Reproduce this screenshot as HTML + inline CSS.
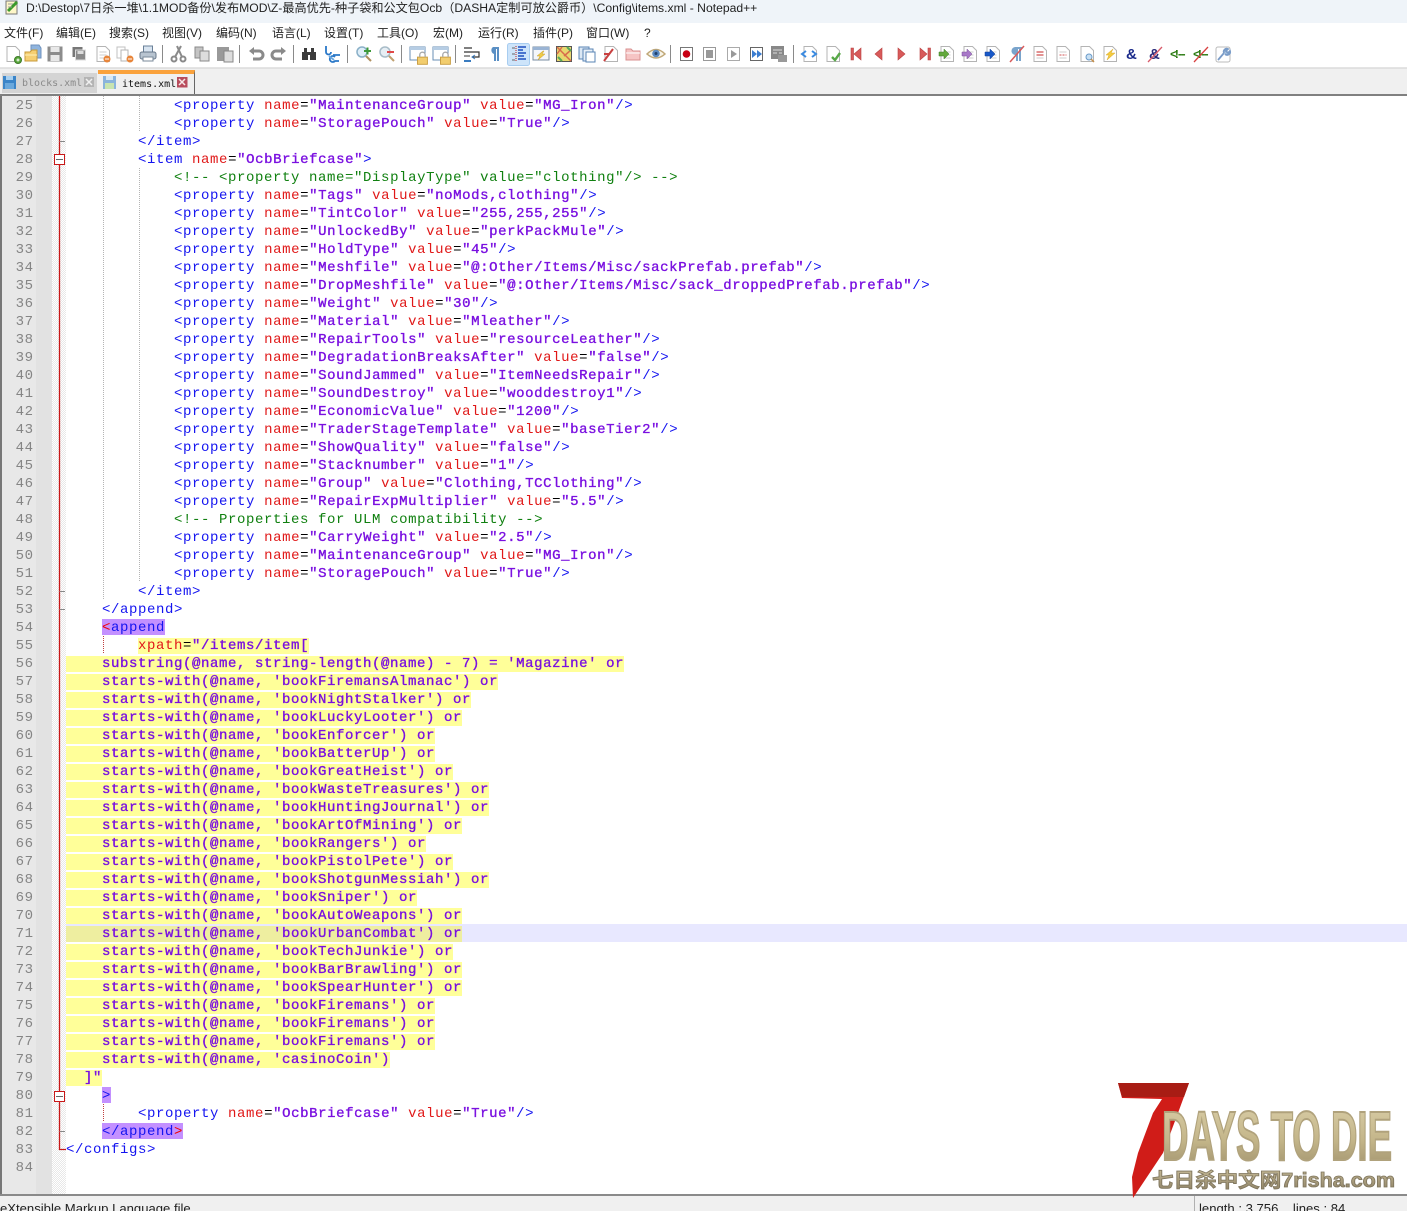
<!DOCTYPE html>
<html><head><meta charset="utf-8"><style>
html,body{margin:0;padding:0;background:#fff}
#p{position:relative;width:1407px;height:1211px;overflow:hidden;background:#fff;font-family:"Liberation Sans","Noto Sans CJK SC",sans-serif}
#title{position:absolute;left:0;top:0;width:1407px;height:23px;background:#eff4f9}
#title span{position:absolute;left:26px;top:1px;font-size:12.15px;line-height:15px;color:#222;white-space:pre}
#menu{position:absolute;left:0;top:23px;width:1407px;height:19px;background:#fff;font-size:12px;color:#222}
#menu span{position:absolute;top:2px;line-height:16px;white-space:pre}
#tb{position:absolute;left:0;top:42px}
#tabs{position:absolute;left:0;top:68px;width:1407px;height:26px;background:#f0f0f0;border-top:1px solid #e0e0e0;box-sizing:border-box}
.tab{position:absolute;box-sizing:border-box;font-family:"DejaVu Sans Mono","Liberation Mono",monospace;font-size:10px;white-space:pre}
#ed{position:absolute;left:0;top:96px;width:1407px;font-family:"Liberation Mono",monospace;font-size:14px;letter-spacing:.6px}
.l{position:relative;height:18px;line-height:20px;padding-left:66px;white-space:pre;color:#000}
.l i{position:absolute;left:0;width:33.6px;text-align:right;font-style:normal;color:#858585;font-weight:normal;-webkit-text-stroke:0;top:0}
.t{color:#1414f0}.a{color:#e01818}.v{color:#7a10e0;-webkit-text-stroke:.35px #7a10e0}.c{color:#108010}
.y{background:#ffff99;display:inline-block;height:16px;line-height:16px;margin-top:2px;vertical-align:top}
.cur{background:linear-gradient(90deg,transparent 66px,#e8e8ff 66px)}.cur .y{background:#eeeea0}
.m{background:#c390ff;display:inline-block;height:16px;line-height:18px;margin-top:1px;vertical-align:top}
.r{color:#f00000}
#st{position:absolute;left:0;top:1194px;width:1407px;height:17px;background:#f0f0f0;border-top:2px solid #8a8a8a;box-sizing:border-box;font-size:13.1px;color:#222;overflow:hidden}
#st span{position:absolute;top:5px;line-height:15px;white-space:pre}
</style></head><body><div id="p">

<div id="title"><span>D:\Destop\7日杀一堆\1.1MOD备份\发布MOD\Z-最高优先-种子袋和公文包Ocb（DASHA定制可放公爵币）\Config\items.xml - Notepad++</span>
<svg style="position:absolute;left:4px;top:0" width="18" height="16"><path d="M2 1H13V14H2Z" fill="#fdf6c8" stroke="#777"/><path d="M4 11L13 2" stroke="#3a9a2a" stroke-width="3"/><path d="M4 4H9M4 7H8" stroke="#999"/></svg></div>

<div id="menu">
<span style="left:4px">文件(F)</span><span style="left:56px">编辑(E)</span><span style="left:109px">搜索(S)</span><span style="left:162px">视图(V)</span><span style="left:216px">编码(N)</span><span style="left:272px">语言(L)</span><span style="left:324px">设置(T)</span><span style="left:377px">工具(O)</span><span style="left:433px">宏(M)</span><span style="left:478px">运行(R)</span><span style="left:533px">插件(P)</span><span style="left:586px">窗口(W)</span><span style="left:644px">?</span>
</div>

<svg id="tb" width="1407" height="26" viewBox="0 0 1407 26">
<defs>
<path id="d" d="M-6-7.500H2.500L6.500-3.500V7.500H-6Z" fill="#fff" stroke="#b4b4b4"/>
<g id="ld"><use href="#d"/><path d="M-3.500-2H3.500M-3.500 1H3.500M-3.500 4H3.500" stroke="#ccc"/></g>
<g id="lock"><rect x="-5" y="-1" width="11" height="8" fill="#f2cd6e" stroke="#c79a3a"/><path d="M-2.500-1V-3.500A3 3 0 0 1 3.500-3.500V-1" fill="none" stroke="#aaa" stroke-width="1.500"/></g>
<g id="win"><rect x="-8" y="-7" width="15" height="13" fill="#fff" stroke="#6a8fb5"/><rect x="-8" y="-7" width="15" height="3" fill="#b6cde4"/></g>
</defs>
<rect width="1407" height="26" fill="#fff"/>
<g transform="translate(13,12)"><use href="#d"/><circle cx="5" cy="6" r="3.500" fill="#5aa83c" stroke="#3d7a28"/><path d="M3.500 6H6.500M5 4.500V7.500" stroke="#fff"/></g>
<g transform="translate(33,12)"><path d="M-2-9H6L8-6V4H-2Z" fill="#8fb4de" stroke="#6f92bd"/><path d="M-8-2H-3L-1-4H4V7H-8Z" fill="#f5cf72" stroke="#c79a3a"/><path d="M-8 1H4" stroke="#fff0b8"/></g>
<g transform="translate(55,12)"><rect x="-7.500" y="-7.500" width="15" height="15" fill="#8c8c8c"/><rect x="-4.500" y="-7" width="9" height="5" fill="#e8e8e8"/><rect x="-4.500" y="1" width="9" height="6" fill="#e8e8e8"/></g>
<g transform="translate(79,12)"><rect x="-6.500" y="-7" width="10" height="10" fill="#777"/><rect x="-3.500" y="-4" width="10" height="10" fill="#8a8a8a" stroke="#ddd"/><rect x="-1.500" y="-3" width="6" height="3" fill="#ddd"/></g>
<g transform="translate(103,12)"><use href="#ld"/><circle cx="4" cy="5" r="3.500" fill="#e8853a"/><path d="M2 5H6" stroke="#fff"/></g>
<g transform="translate(125,12)"><path d="M-8-7H0V4H-8Z" fill="#fff" stroke="#c0c0c0"/><path d="M-4-4H3V7H-4Z" fill="#fff" stroke="#b4b4b4"/><circle cx="5" cy="5" r="3.500" fill="#e8853a"/><path d="M3 5H7" stroke="#fff"/></g>
<g transform="translate(148,12)"><rect x="-4.500" y="-8" width="9" height="6" fill="#d8e4f0" stroke="#6a8098"/><rect x="-8" y="-2" width="16" height="7" rx="2" fill="#b8c4d0" stroke="#68788a"/><rect x="-5" y="3" width="10" height="4" fill="#fff" stroke="#7a8a9a"/></g>
<path d="M162.500 3V21M239.500 3V21M293.500 3V21M347.500 3V21M401.500 3V21M455.500 3V21M670.500 3V21M793.500 3V21" stroke="#8a8a8a"/>
<g transform="translate(178,12)" stroke="#8a8a8a" fill="none" stroke-width="2"><path d="M3-8L-3 3M-1-8L4 3"/><circle cx="-4" cy="5" r="2.500"/><circle cx="5" cy="5" r="2.500"/></g>
<g transform="translate(202,12)"><path d="M-7-7H1V4H-7Z" fill="#c4c4c4" stroke="#8a8a8a"/><path d="M-2-3H7V7H-2Z" fill="#ddd" stroke="#8a8a8a"/></g>
<g transform="translate(225,12)"><rect x="-8" y="-7" width="12" height="14" fill="#999"/><rect x="-1" y="-3" width="9" height="11" fill="#ddd" stroke="#888"/></g>
<g transform="translate(256,12)" fill="none" stroke="#8a8a8a" stroke-width="3"><path d="M-4-3H3A4 4 0 0 1 3 5H-3"/><path d="M-7-3L-2-7V1Z" fill="#8a8a8a" stroke="none"/></g>
<g transform="translate(279,12)" fill="none" stroke="#8a8a8a" stroke-width="3"><path d="M4-3H-3A4 4 0 0 0-3 5H3"/><path d="M7-3L2-7V1Z" fill="#8a8a8a" stroke="none"/></g>
<g transform="translate(309,12)" fill="#3c3c3c"><rect x="-7" y="-2" width="6" height="8"/><rect x="1" y="-2" width="6" height="8"/><rect x="-5" y="-6" width="3" height="5"/><rect x="2" y="-6" width="3" height="5"/><rect x="-1" y="-2" width="2" height="3"/></g>
<g transform="translate(333,12)" fill="none" stroke="#2a78c8" stroke-width="1.800"><path d="M-7-8V-2A2.500 2.500 0 1 0-2-2"/><path d="M0 1H7M2 3A3 3 0 1 0 2 7H6"/><path d="M-4 2L1 6" stroke="#6aa8e0"/></g>
<g transform="translate(364,12)"><circle cx="-2" cy="-2" r="5" fill="#dfeef8" stroke="#8ab0c8" stroke-width="1.500"/><path d="M2 2L7 7" stroke="#b09060" stroke-width="2"/><path d="M0-3H7M3.500-6.500V.5" stroke="#3d9a3a" stroke-width="2"/></g>
<g transform="translate(387,12)"><circle cx="-2" cy="-2" r="5" fill="#e6eef4" stroke="#a8bcc8" stroke-width="1.500"/><path d="M2 2L7 7" stroke="#c0a070" stroke-width="2"/><path d="M0-2H7" stroke="#e04848" stroke-width="2"/></g>
<g transform="translate(418,12)"><use href="#win"/><use href="#lock" transform="translate(4,4) scale(.9)"/></g>
<g transform="translate(441,12)"><use href="#win"/><use href="#lock" transform="translate(4,4) scale(.9)"/></g>
<g transform="translate(472,12)" fill="none"><path d="M-8-6H0M-8-2H7V3H0" stroke="#333" stroke-width="1.200"/><path d="M-8 2H-2" stroke="#333"/><path d="M-8 7H-1" stroke="#3a7cc0" stroke-width="2"/><path d="M3 1L0 3L3 5" stroke="#3a7cc0"/></g>
<g transform="translate(494,12)" fill="#5a8fc4"><path d="M-1-7H5V7H3V-5H2V7H0V0A4 4 0 0 1-1-7Z"/></g>
<rect x="507.500" y="1.500" width="22" height="22" rx="2" fill="#cde4fa" stroke="#a8cdf0"/>
<g transform="translate(519,12)" stroke="#1f4fc0"><path d="M-3-8V8" stroke-dasharray="1 1" stroke="#c02020"/><path d="M-1-7H7M-1-4H4M-1-1H7M-1 2H5M-1 5H7" stroke-width="1.600"/><path d="M-7-6H-4M-7 0H-4M-7 6H-4" stroke="#666"/></g>
<g transform="translate(541,12)"><rect x="-8" y="-7" width="16" height="13" fill="#f4f6fa" stroke="#7a8ca0"/><rect x="-8" y="-7" width="16" height="3" fill="#9ab4d4"/><path d="M2-3L-4 2H-1L-3 6L4 0H1L3-3Z" fill="#f0cc48" stroke="#c8a030" stroke-width=".5"/></g>
<g transform="translate(564,12)"><rect x="-7.500" y="-7.500" width="15" height="15" fill="#e8d870" stroke="#555"/><path d="M-7-7L7 7M-2-7L-7 0M7-4L0 2" stroke="#d86c4c" stroke-width="1.500"/><path d="M-6 3L-2 7M3-7L7-3" stroke="#58a858" stroke-width="2"/></g>
<g transform="translate(587,12)"><rect x="-8" y="-7" width="10" height="12" fill="#dce8f4" stroke="#5a84b4"/><rect x="-4" y="-5" width="10" height="12" fill="#e8f0f8" stroke="#5a84b4"/><path d="M-1-2H8V8H-1Z" fill="#fff" stroke="#5a84b4"/></g>
<g transform="translate(610,12)"><use href="#d" transform="translate(1,0)"/><path d="M-6 7L3-5" stroke="#c84040" stroke-width="2"/><path d="M-6 0H0" stroke="#c84040" stroke-width="2"/></g>
<g transform="translate(633,12)"><path d="M-7-5H-2L0-3H7V6H-7Z" fill="#f6c4c4" stroke="#d89090"/><path d="M-7-1H7" stroke="#fff"/></g>
<g transform="translate(656,12)"><path d="M-9 0Q0-9 9 0Q0 8-9 0Z" fill="#f8f4e8" stroke="#c0a878" stroke-width="1.500"/><circle cy="-.5" r="3.800" fill="#5a88c0"/><circle cy="-.5" r="1.500" fill="#20406a"/></g>
<rect x="680.500" y="5.500" width="12" height="13" fill="#fff" stroke="#777"/><circle cx="686.500" cy="12" r="3.800" fill="#c80014"/>
<rect x="703.500" y="5.500" width="12" height="13" fill="#fff" stroke="#999"/><rect x="706" y="8" width="7" height="8" fill="#999"/>
<rect x="727.500" y="5.500" width="12" height="13" fill="#fff" stroke="#aaa"/><path d="M731 8L737 12L731 16Z" fill="#999"/>
<rect x="750.500" y="5.500" width="12" height="13" fill="#fff" stroke="#666"/><path d="M752 8L757 12L752 16ZM757 8L762 12L757 16Z" fill="#3a7cd0"/>
<g transform="translate(779,12)"><rect x="-8" y="-8" width="13" height="13" fill="#888"/><path d="M-6-4H3M-6-1H-2M0-1H3" stroke="#ddd"/><rect x="-1" y="1" width="9" height="7" fill="#999"/></g>
<g transform="translate(809,12)"><use href="#d" transform="translate(1,0)"/><path d="M-3-3L-7 0L-3 3M3-3L7 0L3 3" fill="none" stroke="#3a8ae0" stroke-width="2"/></g>
<g transform="translate(833,12)"><use href="#d"/><path d="M-1 3L2 6L7-1" fill="none" stroke="#58a848" stroke-width="2.400"/></g>
<g fill="#d85a5a" stroke="#b84040" stroke-width=".6">
<path d="M851 6H853.500V18H851ZM861 6V18L854 12Z"/>
<path d="M882 6V18L875 12Z"/>
<path d="M898 6V18L905 12Z"/>
<path d="M928 6H930.500V18H928ZM920 6V18L927 12Z"/></g>
<g transform="translate(947,12)"><use href="#ld"/><path d="M-8-2H-3V-5L2 0L-3 5V2H-8Z" fill="#62a83c" stroke="#3d7a28" stroke-width=".5"/></g>
<g transform="translate(970,12)"><use href="#ld"/><path d="M-8-2H-3V-5L2 0L-3 5V2H-8Z" fill="#a878c8" stroke="#7a5098" stroke-width=".5"/></g>
<g transform="translate(993,12)"><use href="#ld"/><path d="M-8-2H-3V-5L2 0L-3 5V2H-8Z" fill="#1858c8" stroke="#103c90" stroke-width=".5"/></g>
<g transform="translate(1017,12)"><path d="M-2-7H5V-5H4V7H2V-5H1V7H-1V1A4 4 0 0 1-2-7Z" fill="#7aa4cc"/><path d="M-7 8L7-8" stroke="#d85a5a" stroke-width="1.500"/></g>
<g transform="translate(1040,12)"><use href="#d"/><path d="M-3.500-2H3.500M-3.500 1H3.500" stroke="#d05050" stroke-width="1.200"/><path d="M-3.500 4H3.500" stroke="#ccc"/></g>
<g transform="translate(1063,12)"><use href="#d"/><path d="M-3.500-2H3.500" stroke="#ccc"/><path d="M-3.500 1H3.500" stroke="#d05050" stroke-dasharray="2 1"/><path d="M-3.500 4H3.500" stroke="#ccc"/></g>
<g transform="translate(1087,12)"><use href="#d"/><circle cx="2" cy="3" r="3" fill="#c8e0f4" stroke="#6a9ac8"/><path d="M4 5L7 8" stroke="#c8904a" stroke-width="1.500"/></g>
<g transform="translate(1110,12)"><use href="#d"/><path d="M3-5L-4 1H-1L-3 6L5-1H1Z" fill="#f4cc40" stroke="#d8a828" stroke-width=".5"/></g>
<text x="1126" y="17" font-family="Liberation Sans" font-size="15" font-weight="bold" fill="#1a2a8a">&amp;</text>
<text x="1149" y="17" font-family="Liberation Sans" font-size="15" font-weight="bold" fill="#2a2a7a">&amp;</text><path d="M1148 20L1162 5" stroke="#d85a6a" stroke-width="1.300"/>
<text x="1170" y="16" font-family="Liberation Mono" font-size="12" font-weight="bold" fill="#2a7a10" textLength="17">&lt;!--</text>
<text x="1193" y="16" font-family="Liberation Mono" font-size="12" font-weight="bold" fill="#2a7a10" textLength="17">&lt;!--</text><path d="M1194 20L1208 5" stroke="#d84040" stroke-width="1.300"/>
<g transform="translate(1223,12)"><rect x="-7" y="-7" width="14" height="15" rx="2" fill="#fff" stroke="#bbb"/><path d="M-5 6L1-1M1-1A3 3 0 0 1 5-5L3-3L5-1L7-3A3 3 0 0 1 2 0" stroke="#7a9cc8" stroke-width="1.800" fill="#a8c4e0"/></g>
</svg>

<div style="position:absolute;left:0;top:67px;width:1407px;height:1px;background:#e4e4e4"></div>
<div id="tabs">
<div class="tab" style="left:2px;top:4px;width:95px;height:20px;background:#d4d4d4;color:#8a8a8a;line-height:22px;padding-left:20px">blocks.xml</div>
<svg style="position:absolute;left:3px;top:7px" width="14" height="14"><rect width="13" height="13" fill="#3a84c8"/><rect x="3" y="0" width="7" height="4" fill="#a8d0f0"/><rect x="2" y="7" width="9" height="6" fill="#6aa8dc"/></svg>
<svg style="position:absolute;left:84px;top:8px" width="11" height="11"><rect width="10" height="10" fill="#b4b4b4"/><path d="M2 2L8 8M8 2L2 8" stroke="#f0f0f0" stroke-width="1.500"/></svg>
<div class="tab" style="left:98px;top:1px;width:97px;height:24px;background:#f0f0f0;border-top:4px solid #faa23c;border-right:1px solid #666;color:#111;line-height:22px;padding-left:24px">items.xml</div>
<svg style="position:absolute;left:103px;top:7px" width="14" height="14"><rect width="13" height="13" fill="#8ab4dc"/><rect x="3" y="0" width="7" height="4" fill="#d8e8f4"/><rect x="2" y="7" width="9" height="6" fill="#c8e4b0"/></svg>
<svg style="position:absolute;left:177px;top:8px" width="11" height="11"><rect width="10.500" height="10.500" fill="#b84c5c"/><path d="M2 2L8 8M8 2L2 8" stroke="#f6e8e8" stroke-width="1.500"/></svg>
</div>

<div style="position:absolute;left:0;top:94px;width:1407px;height:2px;background:#808080"></div>

<div style="position:absolute;left:2px;top:96px;width:34px;height:1098px;background:#e8e8e8"></div>
<div style="position:absolute;left:36px;top:96px;width:16px;height:1098px;background:#e2e2e2"></div>
<div style="position:absolute;left:52px;top:96px;width:14px;height:1098px;background:repeating-conic-gradient(#e8e8e8 0 25%,#fff 0 50%) 0 0/2px 2px"></div>
<div style="position:absolute;left:0;top:96px;width:2px;height:1098px;background:#777"></div>

<div id="ed">
<div class="l"><i>25</i>            <span class="t">&lt;property</span> <span class="a">name</span>=<span class="v">"MaintenanceGroup"</span> <span class="a">value</span>=<span class="v">"MG_Iron"</span><span class="t">/&gt;</span></div>
<div class="l"><i>26</i>            <span class="t">&lt;property</span> <span class="a">name</span>=<span class="v">"StoragePouch"</span> <span class="a">value</span>=<span class="v">"True"</span><span class="t">/&gt;</span></div>
<div class="l"><i>27</i>        <span class="t">&lt;/item&gt;</span></div>
<div class="l"><i>28</i>        <span class="t">&lt;item</span> <span class="a">name</span>=<span class="v">"OcbBriefcase"</span><span class="t">&gt;</span></div>
<div class="l"><i>29</i>            <span class="c">&lt;!-- &lt;property name="DisplayType" value="clothing"/&gt; --&gt;</span></div>
<div class="l"><i>30</i>            <span class="t">&lt;property</span> <span class="a">name</span>=<span class="v">"Tags"</span> <span class="a">value</span>=<span class="v">"noMods,clothing"</span><span class="t">/&gt;</span></div>
<div class="l"><i>31</i>            <span class="t">&lt;property</span> <span class="a">name</span>=<span class="v">"TintColor"</span> <span class="a">value</span>=<span class="v">"255,255,255"</span><span class="t">/&gt;</span></div>
<div class="l"><i>32</i>            <span class="t">&lt;property</span> <span class="a">name</span>=<span class="v">"UnlockedBy"</span> <span class="a">value</span>=<span class="v">"perkPackMule"</span><span class="t">/&gt;</span></div>
<div class="l"><i>33</i>            <span class="t">&lt;property</span> <span class="a">name</span>=<span class="v">"HoldType"</span> <span class="a">value</span>=<span class="v">"45"</span><span class="t">/&gt;</span></div>
<div class="l"><i>34</i>            <span class="t">&lt;property</span> <span class="a">name</span>=<span class="v">"Meshfile"</span> <span class="a">value</span>=<span class="v">"@:Other/Items/Misc/sackPrefab.prefab"</span><span class="t">/&gt;</span></div>
<div class="l"><i>35</i>            <span class="t">&lt;property</span> <span class="a">name</span>=<span class="v">"DropMeshfile"</span> <span class="a">value</span>=<span class="v">"@:Other/Items/Misc/sack_droppedPrefab.prefab"</span><span class="t">/&gt;</span></div>
<div class="l"><i>36</i>            <span class="t">&lt;property</span> <span class="a">name</span>=<span class="v">"Weight"</span> <span class="a">value</span>=<span class="v">"30"</span><span class="t">/&gt;</span></div>
<div class="l"><i>37</i>            <span class="t">&lt;property</span> <span class="a">name</span>=<span class="v">"Material"</span> <span class="a">value</span>=<span class="v">"Mleather"</span><span class="t">/&gt;</span></div>
<div class="l"><i>38</i>            <span class="t">&lt;property</span> <span class="a">name</span>=<span class="v">"RepairTools"</span> <span class="a">value</span>=<span class="v">"resourceLeather"</span><span class="t">/&gt;</span></div>
<div class="l"><i>39</i>            <span class="t">&lt;property</span> <span class="a">name</span>=<span class="v">"DegradationBreaksAfter"</span> <span class="a">value</span>=<span class="v">"false"</span><span class="t">/&gt;</span></div>
<div class="l"><i>40</i>            <span class="t">&lt;property</span> <span class="a">name</span>=<span class="v">"SoundJammed"</span> <span class="a">value</span>=<span class="v">"ItemNeedsRepair"</span><span class="t">/&gt;</span></div>
<div class="l"><i>41</i>            <span class="t">&lt;property</span> <span class="a">name</span>=<span class="v">"SoundDestroy"</span> <span class="a">value</span>=<span class="v">"wooddestroy1"</span><span class="t">/&gt;</span></div>
<div class="l"><i>42</i>            <span class="t">&lt;property</span> <span class="a">name</span>=<span class="v">"EconomicValue"</span> <span class="a">value</span>=<span class="v">"1200"</span><span class="t">/&gt;</span></div>
<div class="l"><i>43</i>            <span class="t">&lt;property</span> <span class="a">name</span>=<span class="v">"TraderStageTemplate"</span> <span class="a">value</span>=<span class="v">"baseTier2"</span><span class="t">/&gt;</span></div>
<div class="l"><i>44</i>            <span class="t">&lt;property</span> <span class="a">name</span>=<span class="v">"ShowQuality"</span> <span class="a">value</span>=<span class="v">"false"</span><span class="t">/&gt;</span></div>
<div class="l"><i>45</i>            <span class="t">&lt;property</span> <span class="a">name</span>=<span class="v">"Stacknumber"</span> <span class="a">value</span>=<span class="v">"1"</span><span class="t">/&gt;</span></div>
<div class="l"><i>46</i>            <span class="t">&lt;property</span> <span class="a">name</span>=<span class="v">"Group"</span> <span class="a">value</span>=<span class="v">"Clothing,TCClothing"</span><span class="t">/&gt;</span></div>
<div class="l"><i>47</i>            <span class="t">&lt;property</span> <span class="a">name</span>=<span class="v">"RepairExpMultiplier"</span> <span class="a">value</span>=<span class="v">"5.5"</span><span class="t">/&gt;</span></div>
<div class="l"><i>48</i>            <span class="c">&lt;!-- Properties for ULM compatibility --&gt;</span></div>
<div class="l"><i>49</i>            <span class="t">&lt;property</span> <span class="a">name</span>=<span class="v">"CarryWeight"</span> <span class="a">value</span>=<span class="v">"2.5"</span><span class="t">/&gt;</span></div>
<div class="l"><i>50</i>            <span class="t">&lt;property</span> <span class="a">name</span>=<span class="v">"MaintenanceGroup"</span> <span class="a">value</span>=<span class="v">"MG_Iron"</span><span class="t">/&gt;</span></div>
<div class="l"><i>51</i>            <span class="t">&lt;property</span> <span class="a">name</span>=<span class="v">"StoragePouch"</span> <span class="a">value</span>=<span class="v">"True"</span><span class="t">/&gt;</span></div>
<div class="l"><i>52</i>        <span class="t">&lt;/item&gt;</span></div>
<div class="l"><i>53</i>    <span class="t">&lt;/append&gt;</span></div>
<div class="l"><i>54</i>    <span class="m"><span class="r">&lt;</span><span class="t">append</span></span></div>
<div class="l"><i>55</i>        <span class="y"><span class="a">xpath</span>=<span class="v">"/items/item[</span></span></div>
<div class="l"><i>56</i><span class="y v">    substring(@name, string-length(@name) - 7) = 'Magazine' or</span></div>
<div class="l"><i>57</i><span class="y v">    starts-with(@name, 'bookFiremansAlmanac') or</span></div>
<div class="l"><i>58</i><span class="y v">    starts-with(@name, 'bookNightStalker') or</span></div>
<div class="l"><i>59</i><span class="y v">    starts-with(@name, 'bookLuckyLooter') or</span></div>
<div class="l"><i>60</i><span class="y v">    starts-with(@name, 'bookEnforcer') or</span></div>
<div class="l"><i>61</i><span class="y v">    starts-with(@name, 'bookBatterUp') or</span></div>
<div class="l"><i>62</i><span class="y v">    starts-with(@name, 'bookGreatHeist') or</span></div>
<div class="l"><i>63</i><span class="y v">    starts-with(@name, 'bookWasteTreasures') or</span></div>
<div class="l"><i>64</i><span class="y v">    starts-with(@name, 'bookHuntingJournal') or</span></div>
<div class="l"><i>65</i><span class="y v">    starts-with(@name, 'bookArtOfMining') or</span></div>
<div class="l"><i>66</i><span class="y v">    starts-with(@name, 'bookRangers') or</span></div>
<div class="l"><i>67</i><span class="y v">    starts-with(@name, 'bookPistolPete') or</span></div>
<div class="l"><i>68</i><span class="y v">    starts-with(@name, 'bookShotgunMessiah') or</span></div>
<div class="l"><i>69</i><span class="y v">    starts-with(@name, 'bookSniper') or</span></div>
<div class="l"><i>70</i><span class="y v">    starts-with(@name, 'bookAutoWeapons') or</span></div>
<div class="l cur"><i>71</i><span class="y v">    starts-with(@name, 'bookUrbanCombat') or</span></div>
<div class="l"><i>72</i><span class="y v">    starts-with(@name, 'bookTechJunkie') or</span></div>
<div class="l"><i>73</i><span class="y v">    starts-with(@name, 'bookBarBrawling') or</span></div>
<div class="l"><i>74</i><span class="y v">    starts-with(@name, 'bookSpearHunter') or</span></div>
<div class="l"><i>75</i><span class="y v">    starts-with(@name, 'bookFiremans') or</span></div>
<div class="l"><i>76</i><span class="y v">    starts-with(@name, 'bookFiremans') or</span></div>
<div class="l"><i>77</i><span class="y v">    starts-with(@name, 'bookFiremans') or</span></div>
<div class="l"><i>78</i><span class="y v">    starts-with(@name, 'casinoCoin')</span></div>
<div class="l"><i>79</i><span class="y v">  ]"</span></div>
<div class="l"><i>80</i>    <span class="m t">&gt;</span></div>
<div class="l"><i>81</i>        <span class="t">&lt;property</span> <span class="a">name</span>=<span class="v">"OcbBriefcase"</span> <span class="a">value</span>=<span class="v">"True"</span><span class="t">/&gt;</span></div>
<div class="l"><i>82</i>    <span class="m"><span class="t">&lt;/append</span><span class="r">&gt;</span></span></div>
<div class="l"><i>83</i><span class="t">&lt;/configs&gt;</span></div>
<div class="l"><i>84</i></div>
</div>

<svg style="position:absolute;left:0;top:0;pointer-events:none" width="1407" height="1211">
<g stroke="#b4b4b4" stroke-dasharray="1 1">
<path d="M103.500 96V600M139.500 96V132M139.500 168V582"/>
</g>
<path d="M103.500 636V654M103.500 1104V1122" stroke="#c04040" stroke-dasharray="1 1"/>
<path d="M59.500 96V1149.500H66" fill="none" stroke="#c81818" stroke-width="1.300"/>
<path d="M59.500 141.500H65M59.500 591.500H65M59.500 609.500H65M59.500 1131.500H65" stroke="#888"/>
<rect x="54.500" y="154.500" width="10" height="10" fill="#fff" stroke="#c81818"/><path d="M56 159.500H63" stroke="#666"/>
<rect x="54.500" y="1091.500" width="10" height="10" fill="#fff" stroke="#c81818"/><path d="M56 1096.500H63" stroke="#666"/>
</svg>

<div id="st"><span style="left:0">eXtensible Markup Language file</span><span style="left:1194px;top:0;width:1px;height:20px;background:#b0b0b0"></span><span style="left:1199px">length : 3,756    lines : 84</span></div>

<svg style="position:absolute;left:0;top:0" width="1407" height="1211">
<defs><linearGradient id="g" x1="0" y1="0" x2="0" y2="1"><stop offset="0" stop-color="#dcd0aa"/><stop offset=".55" stop-color="#c4b68a"/><stop offset="1" stop-color="#9a8c68"/></linearGradient>
<linearGradient id="g2" x1="0" y1="0" x2="0" y2="1"><stop offset="0" stop-color="#c8bc98"/><stop offset="1" stop-color="#8c8064"/></linearGradient></defs>
<path d="M1118 1083H1189L1178 1113L1163 1153L1147 1177L1133 1198L1132 1177L1138 1153L1153 1113L1162 1099L1122 1098Z" fill="#d01c18"/>
<path d="M1118 1083H1189L1184 1097H1122Z" fill="#a81c14"/>
<text x="1162" y="1160" font-family="Liberation Sans" font-weight="bold" font-size="70" fill="url(#g)" stroke="#b0a27c" stroke-width="2" textLength="230" lengthAdjust="spacingAndGlyphs">DAYS TO DIE</text>
<text x="1152" y="1187" font-family="Liberation Sans,Noto Sans CJK SC,sans-serif" font-weight="bold" font-size="20" fill="url(#g2)" stroke="#7e745c" stroke-width=".8" textLength="243" lengthAdjust="spacingAndGlyphs">七日杀中文网7risha.com</text>
</svg>

</div></body></html>
